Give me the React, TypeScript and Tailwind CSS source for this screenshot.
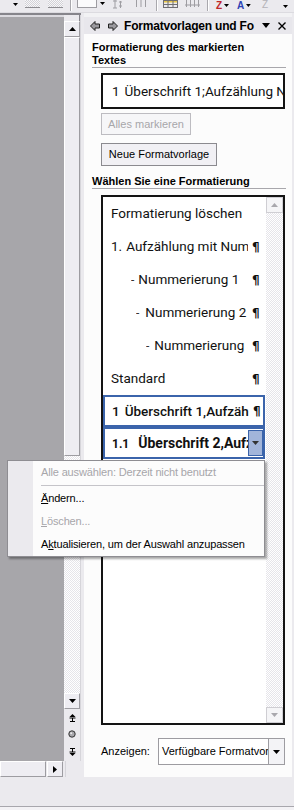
import React from "react";

const ui = "font-['Liberation_Sans',Arial,sans-serif]";
const doc = "font-['Roboto','Liberation_Sans',sans-serif]";
const check =
  "bg-[repeating-conic-gradient(#ffffff_0%_25%,#e6e5ea_0%_50%)] bg-[length:2px_2px]";

const Tri = ({ up = false, color = "#000" }: { up?: boolean; color?: string }) => (
  <svg width="7" height="4" viewBox="0 0 7 4">
    {up ? <path d="M0 4h7L3.5 0z" fill={color} /> : <path d="M0 0h7L3.5 4z" fill={color} />}
  </svg>
);

// classic scroll button
const ScrollBtn = ({ up = false }: { up?: boolean }) => (
  <div className="flex h-[16px] items-center justify-center border border-t-white border-l-white border-r-[#9d9ca1] border-b-[#9d9ca1] bg-[#eeedf2]">
    <Tri up={up} />
  </div>
);

const Toolbar = () => (
  <div className="flex h-[13px] items-start overflow-hidden border-b border-[#dcdbe0] bg-[#ebeaee]">
    <span className="ml-[13px] mt-[3px] w-[5px]">
      <svg width="5" height="3" viewBox="0 0 5 3"><path d="M0 0h5L2.5 3z" fill="#000" /></svg>
    </span>
    <span className="ml-[7px] h-[8px] w-[15px] border-b border-[#8d8c91] bg-[repeating-conic-gradient(#d2d1d6_0%_25%,#f7f7f9_0%_50%)] bg-[length:2px_2px]" />
    <span className="ml-[8px] h-[8px] w-[15px] border-b border-[#8d8c91] bg-[repeating-conic-gradient(#d2d1d6_0%_25%,#f7f7f9_0%_50%)] bg-[length:2px_2px]" />
    <span className="ml-[7px] h-[11px] w-[2px] border-l border-r border-l-[#a9a8ad] border-r-white" />
    <span className="ml-[5px] h-[8px] w-[20px] border-b border-l border-r border-[#9e9da2] bg-[#fbfbfc]" />
    <span className="ml-[3px] mt-[2px] w-[5px]">
      <svg width="5" height="3" viewBox="0 0 5 3"><path d="M0 0h5L2.5 3z" fill="#000" /></svg>
    </span>
    <span className="ml-[7px] w-[11px]">
      <svg width="11" height="9" viewBox="0 0 11 9">
        <path d="M1 1h4M3 0v8M1 8h4M7 2h3M8.5 1v7M7 6h3" stroke="#9e9da2" strokeWidth="1" fill="none" />
      </svg>
    </span>
    <span className="ml-[12px] w-[12px]">
      <svg width="12" height="8" viewBox="0 0 12 8">
        <path d="M1.5 0v7M6 0v7M10.5 0v7" stroke="#9e9da2" strokeWidth="1" fill="none" />
      </svg>
    </span>
    <span className="ml-[9px] h-[11px] w-[2px] border-l border-r border-l-[#a9a8ad] border-r-white" />
    <span className="ml-[5px] w-[15px]">
      <svg width="15" height="8" viewBox="0 0 15 8">
        <rect x="0.5" y="0.5" width="14" height="2" fill="#e8c64a" />
        <rect x="0.5" y="0.5" width="14" height="7" fill="none" stroke="#6f6e73" />
        <path d="M0.5 4.5h14M5 0.5v7M10 0.5v7" stroke="#6f6e73" />
      </svg>
    </span>
    <span className="ml-[7px] w-[15px]">
      <svg width="15" height="9" viewBox="0 0 15 9">
        <path d="M1.5 0v7M5.5 0v7M9.5 0v7M13.5 0v7M0 5h15" stroke="#9e9da2" strokeWidth="1" fill="none" />
      </svg>
    </span>
    <span className="ml-[7px] h-[11px] w-[2px] border-l border-r border-l-[#a9a8ad] border-r-white" />
    <span className="ml-[7px] flex h-[11px] w-[14px] items-center gap-[2px] leading-none">
      <span className={`${ui} text-[10px] font-bold text-[#c0282b]`}>Z</span>
      <svg width="5" height="3" viewBox="0 0 5 3"><path d="M0 0h5L2.5 3z" fill="#000" /></svg>
    </span>
    <span className="ml-[7px] flex h-[11px] w-[14px] items-center gap-[2px] leading-none">
      <span className={`${ui} text-[10px] font-bold text-[#2d43b5]`}>A</span>
      <svg width="5" height="3" viewBox="0 0 5 3"><path d="M0 0h5L2.5 3z" fill="#000" /></svg>
    </span>
    <span className={`${ui} ml-[11px] w-[9px] text-[10px] leading-[9px] text-[#b4b3b8]`}>Z</span>
    <span className="ml-[12px] mt-[5px] w-[5px]">
      <svg width="5" height="3" viewBox="0 0 5 3"><path d="M0 0h5L2.5 3z" fill="#000" /></svg>
    </span>
  </div>
);

const LeftPane = () => (
  <div className="flex w-[84px] shrink-0 flex-col">
    <div className="h-[2px] w-[81px] bg-[#86858b]" />
    <div className="flex h-[746px]">
      <div className="flex w-[64px] flex-col">
        <div className="h-[2px] bg-[#dcdbe0]" />
        <div className="flex-1 bg-[#a7a6aa]" />
      </div>
      <div className="flex w-[16px] flex-col">
        <div className="h-[6px] border-r border-[#86858b] bg-[#ebeaee]" />
        <ScrollBtn up />
        <div className="h-[419px] border border-t-white border-l-white border-r-[#9d9ca1] border-b-[#9d9ca1] bg-[#eeedf2]" />
        <div className={`h-[237px] ${check}`} />
        <ScrollBtn />
        <div className="flex flex-1 flex-col items-center pt-[5px]">
          <svg width="7" height="8" viewBox="0 0 7 8">
            <path d="M3.5 0L6.5 3H0.5z" fill="#000" />
            <path d="M0.5 4h6M3.5 4v4M1 7.5h5" stroke="#000" strokeWidth="1" />
          </svg>
          <svg className="mt-[8px]" width="8" height="8" viewBox="0 0 8 8">
            <circle cx="4" cy="4" r="3.2" fill="#a9a8ad" stroke="#333" strokeWidth="1" />
            <circle cx="3.2" cy="3.2" r="1" fill="#e8e8ea" />
          </svg>
          <svg className="mt-[10px]" width="7" height="8" viewBox="0 0 7 8">
            <path d="M1 0.5h5M3.5 0v4M0.5 4h6" stroke="#000" strokeWidth="1" />
            <path d="M3.5 8L6.5 5H0.5z" fill="#000" />
          </svg>
        </div>
      </div>
      <div className="w-px bg-[#d6d5da]" />
    </div>
    <div className="flex h-[16px]">
      <div className="w-[46px] border border-t-white border-l-white border-r-[#9d9ca1] border-b-[#9d9ca1] bg-[#eeedf2]" />
      <div className="ml-px flex w-[16px] items-center justify-center border border-t-white border-l-white border-r-[#9d9ca1] border-b-[#9d9ca1] bg-[#eeedf2]">
        <svg width="4" height="7" viewBox="0 0 4 7"><path d="M0 0v7l4-3.5z" fill="#000" /></svg>
      </div>
      <div className="w-[2px]" />
      <div className="w-px bg-[#d6d5da]" />
    </div>
  </div>
);

const Pilcrow = () => (
  <span className="font-['DejaVu_Sans',sans-serif] text-[12px] font-bold leading-none text-[#111]">¶</span>
);

const items = [
  { pre: "", text: "Formatierung löschen", indent: "pl-[8px]", pil: false, gap: "" },
  { pre: "1.", text: "Aufzählung mit Num", indent: "pl-[8px]", pil: true, gap: "ml-[4px]" },
  { pre: "-", text: "Nummerierung 1", indent: "pl-[28px]", pil: true, gap: "ml-[4px]" },
  { pre: "-", text: "Nummerierung 2", indent: "pl-[33px]", pil: true, gap: "ml-[6px]" },
  { pre: "-", text: "Nummerierung 3", indent: "pl-[43px]", pil: true, gap: "ml-[5px]" },
  { pre: "", text: "Standard", indent: "pl-[8px]", pil: true, gap: "" },
];

const StyleList = () => (
  <div className="ml-[9px] mr-px mt-[6px] flex h-[530px] border-2 border-[#141414] bg-white">
    <div className={`${doc} flex w-[162px] flex-col text-[13.5px] text-[#111]`}>
      {items.map((it, i) => (
        <div key={i} className={`flex h-[33px] items-center ${it.indent} pr-[5px]`}>
          <div className="min-w-0 flex-1 overflow-hidden whitespace-nowrap">
            {it.pre && <span className={it.pre === "-" ? "text-[12px] text-[#333]" : ""}>{it.pre}</span>}
            <span className={it.gap}>{it.text}</span>
          </div>
          {it.pil && (
            <span className="ml-[4px] flex w-[8px] shrink-0">
              <Pilcrow />
            </span>
          )}
        </div>
      ))}
      <div className="flex h-[32px] items-center border-2 border-[#3b64ab] pl-[7px] pr-[2px] font-medium">
        <div className="min-w-0 flex-1 overflow-hidden whitespace-nowrap">
          1<span className="ml-[5px]">Überschrift 1,Aufzählung</span>
        </div>
        <span className="ml-[4px] flex w-[8px] shrink-0">
          <Pilcrow />
        </span>
      </div>
      <div className="flex h-[32px] items-center border-2 border-[#3b64ab] pl-[7px] font-bold">
        <div className="min-w-0 flex-1 overflow-hidden whitespace-nowrap text-[14px]">
          <span className="text-[12px]">1.1</span>
          <span className="ml-[9px]">Überschrift 2,Aufzählung</span>
        </div>
        <div className="flex h-[26px] w-[15px] shrink-0 items-center justify-center border border-[#3b64ab] bg-[#a2b5da]">
          <Tri color="#333" />
        </div>
      </div>
    </div>
    <div className={`ml-px flex flex-1 flex-col justify-between ${check}`}>
      <div className="flex h-[16px] items-center justify-center border border-[#cfced3] bg-[#f5f5f7]">
        <Tri up color="#a9a8ad" />
      </div>
      <div className="flex h-[16px] items-center justify-center border border-[#cfced3] bg-[#f5f5f7]">
        <Tri color="#a9a8ad" />
      </div>
    </div>
  </div>
);

const TaskPane = () => (
  <div className="flex w-[208px] shrink-0 flex-col">
    <div className="h-[4px] bg-[#f2f2f4]" />
    <div className="flex h-[17px] items-center bg-[#e8e7ec] pl-[6px]">
      <svg width="10" height="10" viewBox="0 0 10 10">
        <path d="M0.5 5L5 0.5V3H9.5V7H5V9.5z" fill="#9a999e" stroke="#222" strokeWidth="1" strokeLinejoin="round" />
      </svg>
      <svg className="ml-[8px]" width="10" height="10" viewBox="0 0 10 10">
        <path d="M9.5 5L5 0.5V3H0.5V7H5V9.5z" fill="#9a999e" stroke="#222" strokeWidth="1" strokeLinejoin="round" />
      </svg>
      <span className="ml-[6px] w-[132px] shrink-0 overflow-hidden whitespace-nowrap text-[12px] font-bold tracking-[-0.2px]">
        Formatvorlagen und Fo
      </span>
      <span className="ml-[6px] flex">
        <svg width="8" height="5" viewBox="0 0 8 5"><path d="M0 0h8L4 5z" fill="#000" /></svg>
      </span>
      <span className="ml-[8px] flex">
        <svg width="8" height="8" viewBox="0 0 8 8">
          <path d="M0.5 0.5l7 7M7.5 0.5l-7 7" stroke="#000" strokeWidth="1.4" />
        </svg>
      </span>
    </div>
    <div className="flex flex-1 flex-col bg-[#fcfcfc] pl-[8px] pr-[6px] pt-[7px]">
      <div className="border-b border-[#a8a7ac] text-[11px] font-bold leading-[13px]">
        Formatierung des markierten
        <br />
        Textes
      </div>
      <div className={`${doc} ml-[9px] mr-px mt-[5px] flex h-[36px] items-center border-2 border-[#141414] bg-white pl-[9px] text-[13.5px] text-[#111]`}>
        <div className="min-w-0 flex-1 overflow-hidden whitespace-nowrap">
          1<span className="ml-[5px]">Überschrift 1;Aufzählung Nummern</span>
        </div>
      </div>
      <button className="ml-[9px] mt-[4px] flex h-[22px] w-[90px] items-center justify-center border border-[#bdbcc1] bg-[#f6f6f8] text-[11px] text-[#a7a6aa]">
        Alles markieren
      </button>
      <button className="ml-[9px] mt-[8px] flex h-[23px] w-[116px] items-center justify-center border border-[#8b8a8f] bg-[#f1f0f4] text-[11px]">
        Neue Formatvorlage
      </button>
      <div className="mt-[9px] border-b border-[#a8a7ac] text-[11px] font-bold leading-[13px]">
        Wählen Sie eine Formatierung
      </div>
      <StyleList />
      <div className="ml-[9px] mt-[13px] flex h-[27px] items-center">
        <span className="w-[57px] text-[11px]">Anzeigen:</span>
        <div className="flex h-[27px] w-[127px] border border-[#9d9ca1] bg-white">
          <span className="flex-1 self-center overflow-hidden whitespace-nowrap pl-[3px] text-[11px]">
            Verfügbare Formatvorlagen
          </span>
          <div className="flex w-[16px] items-center justify-center border-l border-[#9d9ca1] bg-[#f3f3f6]">
            <Tri />
          </div>
        </div>
      </div>
    </div>
  </div>
);

const ContextMenu = () => (
  <div className="absolute left-[7px] top-[460px] flex h-[97px] w-[258px] border border-[#8e8d92] bg-[#fcfcfc] text-[11px] tracking-[-0.15px] shadow-[2px_2px_2px_rgba(0,0,0,0.35)]">
    <div className="w-[25px] bg-[#ebeaee]" />
    <div className="flex flex-1 flex-col">
      <div className="flex h-[23px] items-center pl-[8px] text-[#a7a6aa]">Alle auswählen: Derzeit nicht benutzt</div>
      <div className="flex h-[3px] items-center pl-[8px]">
        <div className="h-px w-full bg-[#c5c4c9]" />
      </div>
      <div className="flex h-[23px] items-center pl-[8px]">
        <span className="underline">Ä</span>ndern...
      </div>
      <div className="flex h-[23px] items-center pl-[8px] text-[#a7a6aa]">
        <span className="underline">L</span>öschen...
      </div>
      <div className="flex h-[23px] items-center pl-[8px]">
        A<span className="underline">k</span>tualisieren, um der Auswahl anzupassen
      </div>
    </div>
  </div>
);

export default function App() {
  return (
    <div className={`relative h-[810px] w-[294px] overflow-hidden bg-[#ebeaee] ${ui} text-[11px] text-black`}>
      <Toolbar />
      <div className="flex h-[764px]">
        <LeftPane />
        <TaskPane />
      </div>
      <div className="h-[29px]" />
      <div className="h-px bg-[#a8a7ad]" />
      <div className="h-[3px] bg-[#f3f2f5]" />
      <ContextMenu />
    </div>
  );
}
